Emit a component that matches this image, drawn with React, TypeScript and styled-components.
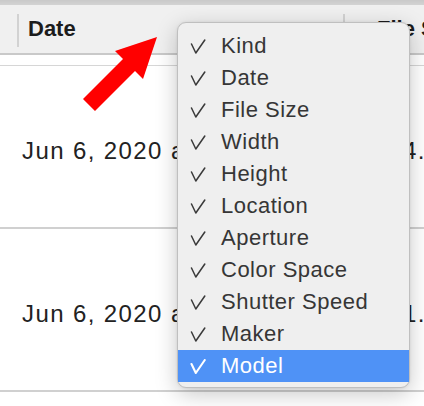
import styled, { createGlobalStyle } from "styled-components";

const GlobalStyle = createGlobalStyle`
  html, body {
    margin: 0;
    padding: 0;
    background: #ffffff;
  }
  body {
    font-family: "Liberation Sans", Arial, Helvetica, sans-serif;
  }
`;

const Window = styled.div`
  position: relative;
  width: 424px;
  height: 406px;
  overflow: hidden;
  background: #ffffff;
`;

const TitleStrip = styled.div`
  height: 5px;
  background: linear-gradient(#c9c9c9, #d3d3d3);
`;

const Columns = styled.div`
  display: grid;
  grid-template-columns: 17px 326px 1fr;
`;

const HeaderRow = styled(Columns)`
  height: 48px;
  background: #f0f0f0;
  border-bottom: 2px solid #c9c9c9;
`;

const HeaderCell = styled.div<{ $pad: number }>`
  display: flex;
  align-items: center;
  position: relative;
  padding-left: ${({ $pad }) => $pad}px;
  font-size: 22px;
  font-weight: 700;
  color: #1c1c1c;
  white-space: nowrap;
  overflow: hidden;

  &::before {
    content: "";
    position: absolute;
    left: 0;
    top: 9px;
    bottom: 6px;
    width: 1.5px;
    background: #d2d2d2;
  }
`;

const Spacer = styled.div`
  height: 10px;
  border-bottom: 1.5px solid #d6d6d6;
`;

const FileRow = styled(Columns)`
  height: 163px;
  padding-top: 9px;
  box-sizing: border-box;
  border-bottom: 2px solid #d0d0d0;
  align-items: center;
  font-size: 24px;
  letter-spacing: 1.4px;
  color: #222222;
`;

const Cell = styled.div<{ $pad: number }>`
  padding-left: ${({ $pad }) => $pad}px;
  white-space: nowrap;
  overflow: hidden;
`;

const Arrow = styled.svg`
  position: absolute;
  left: 0;
  top: 0;
  z-index: 5;
`;

const Menu = styled.div`
  position: absolute;
  z-index: 10;
  left: 177px;
  top: 22px;
  width: 233px;
  box-sizing: border-box;
  padding: 7px 0 5px;
  background: #efefef;
  border: 1px solid #bfbfbf;
  border-radius: 9px;
  box-shadow: 0 6px 22px rgba(0, 0, 0, 0.22), 0 0 3px rgba(0, 0, 0, 0.08);
`;

const MenuItem = styled.div<{ $active?: boolean }>`
  display: flex;
  align-items: center;
  height: 32px;
  padding-left: 12px;
  font-size: 22px;
  letter-spacing: 0.5px;
  color: ${({ $active }) => ($active ? "#ffffff" : "#363636")};
  background: ${({ $active }) => ($active ? "#4f92f6" : "transparent")};
  white-space: nowrap;
`;

const Check = styled.svg`
  width: 16px;
  height: 15px;
  margin-right: 15px;
  flex-shrink: 0;
`;

const columns = [
  "Kind",
  "Date",
  "File Size",
  "Width",
  "Height",
  "Location",
  "Aperture",
  "Color Space",
  "Shutter Speed",
  "Maker",
  "Model",
];

const files = [
  { date: "Jun 6, 2020 at 10:42 AM", size: "4.2 MB" },
  { date: "Jun 6, 2020 at 10:41 AM", size: "1.8 MB" },
];

const App = () => {
  return (
    <Window>
      <GlobalStyle />
      <TitleStrip />
      <HeaderRow>
        <div />
        <HeaderCell $pad={11}>Date</HeaderCell>
        <HeaderCell $pad={34}>File Size</HeaderCell>
      </HeaderRow>
      <Spacer />
      {files.map((file, index) => (
        <FileRow key={index}>
          <div />
          <Cell $pad={5}>{file.date}</Cell>
          <Cell $pad={60}>{file.size}</Cell>
        </FileRow>
      ))}

      <Arrow width="424" height="406" viewBox="0 0 424 406">
        <polygon
          points="157,37 115,51 123,59 83,99 95,111 135,71 143,79"
          fill="#ff0000"
        />
      </Arrow>

      <Menu>
        {columns.map((name) => {
          const active = name === "Model";
          return (
            <MenuItem key={name} $active={active}>
              <Check viewBox="0 0 16 15">
                <polyline
                  points="1.5,5 5.8,14 14.8,1"
                  fill="none"
                  stroke={active ? "#ffffff" : "#3a3a3a"}
                  strokeWidth={active ? 2.1 : 1.5}
                  strokeLinecap="round"
                  strokeLinejoin="round"
                />
              </Check>
              {name}
            </MenuItem>
          );
        })}
      </Menu>
    </Window>
  );
};

export default App;
